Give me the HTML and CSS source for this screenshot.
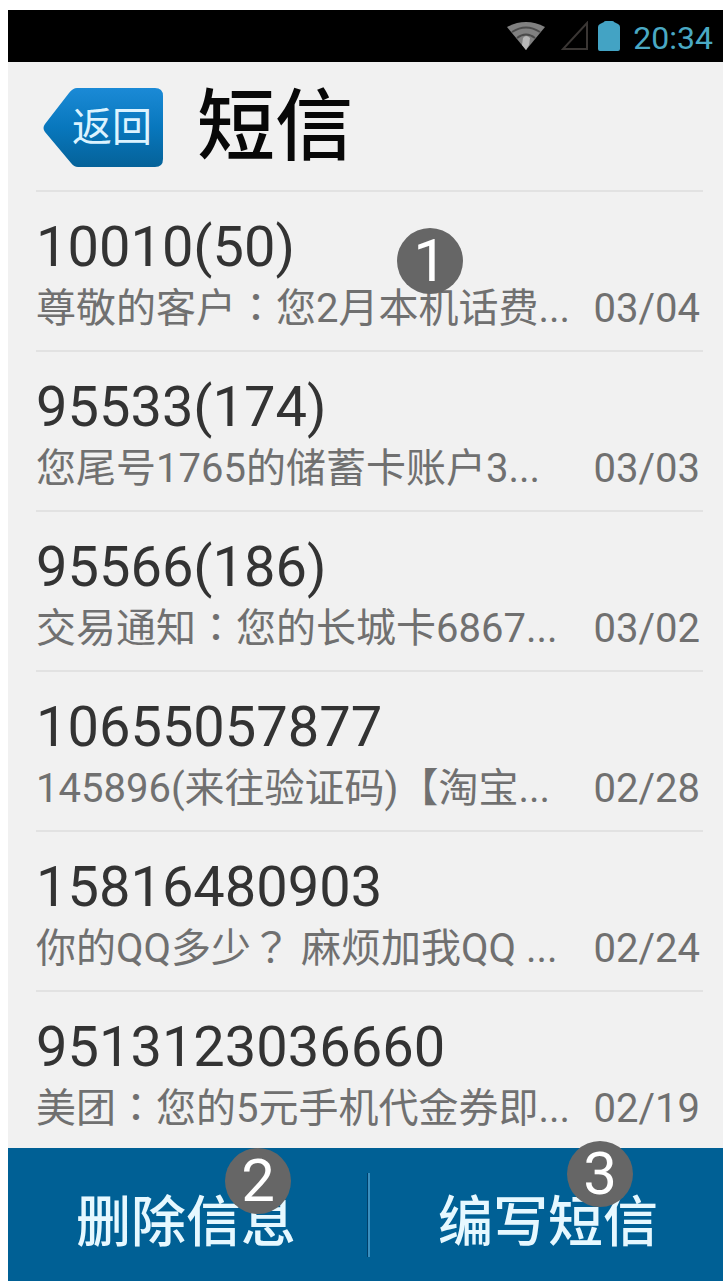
FILE: index.html
```html
<!DOCTYPE html>
<html lang="zh-CN">
<head>
  <meta charset="UTF-8" />
  <meta name="viewport" content="width=device-width, initial-scale=1.0" />
  <title>短信</title>
  <link rel="stylesheet" href="styles.css">
</head>
<body>
  <div class="status-bar">
    <svg class="wifi" viewBox="0 0 42 30" aria-hidden="true">
      <path d="M2 6Q21 -4 40 6L21 29Z" fill="#808080" />
      <path d="M7 11Q21 2 35 11M12 17Q21 10 30 17" fill="none" stroke="#4a4a4a" stroke-width="2" />
      <path d="M18 17Q21 13 25 17L24 24L21 29L17 24Z" fill="#b8b8b8" />
    </svg>
    <svg class="signal" viewBox="0 0 28 30" aria-hidden="true">
      <path d="M26 2V28H2Z" fill="none" stroke="#3a3634" stroke-width="2" />
    </svg>
    <svg class="battery" viewBox="0 0 22 32" aria-hidden="true">
      <path d="M6 2Q6 1 8 1H14Q16 1 16 2L20 4Q22 5 22 7V29Q22 31 20 31H2Q0 31 0 29V7Q0 5 2 4Z" fill="#43a3c4" />
    </svg>
    <span class="clock">20:34</span>
  </div>

  <header class="header">
    <button class="back" type="button">
      <svg class="back-shape" viewBox="0 0 120 80" preserveAspectRatio="none" aria-hidden="true">
        <defs>
          <linearGradient id="backFill" x1="0" y1="0" x2="0" y2="1">
            <stop offset="0" stop-color="#1b8ad6" />
            <stop offset="0.5" stop-color="#0877bd" />
            <stop offset="1" stop-color="#056299" />
          </linearGradient>
        </defs>
        <path d="M34 0H112Q120 0 120 8V71Q120 79 112 79H35Q31 79 28 75L2 44Q-1 40 2 36L26 5Q30 0 34 0Z" fill="url(#backFill)" />
      </svg>
      <span class="back-text">返回</span>
    </button>
    <h1>短信</h1>
  </header>

  <ul class="messages">
    <li class="message">
      <div class="sender">10010(50)</div>
      <div class="line"><span class="preview">尊敬的客户<span class="punct" lang="zh-TW">：</span>您2月本机话费...</span><span class="date">03/04</span></div>
      <span class="badge badge-list">1</span>
    </li>
    <li class="message">
      <div class="sender">95533(174)</div>
      <div class="line"><span class="preview">您尾号1765的储蓄卡账户3...</span><span class="date">03/03</span></div>
    </li>
    <li class="message">
      <div class="sender">95566(186)</div>
      <div class="line"><span class="preview">交易通知<span class="punct" lang="zh-TW">：</span>您的长城卡6867...</span><span class="date">03/02</span></div>
    </li>
    <li class="message">
      <div class="sender">10655057877</div>
      <div class="line"><span class="preview">145896(来往验证码)【淘宝...</span><span class="date">02/28</span></div>
    </li>
    <li class="message">
      <div class="sender">15816480903</div>
      <div class="line"><span class="preview">你的QQ多少<span class="punct" lang="zh-TW">？</span> 麻烦加我QQ ...</span><span class="date">02/24</span></div>
    </li>
    <li class="message">
      <div class="sender">9513123036660</div>
      <div class="line"><span class="preview">美团<span class="punct" lang="zh-TW">：</span>您的5元手机代金券即...</span><span class="date">02/19</span></div>
    </li>
  </ul>

  <nav class="actions">
    <button class="action" type="button">删除信息<span class="badge badge-delete">2</span></button>
    <span class="divider"></span>
    <button class="action" type="button">编写短信<span class="badge badge-write">3</span></button>
  </nav>
</body>
</html>
```

FILE: styles.css
```css
* {
  box-sizing: border-box;
}
body {
  margin: 0;
  padding: 10px 0 0 8px;
  min-height: 100vh;
  display: flex;
  flex-direction: column;
  background: #fff;
  font-family: Roboto, "Noto Sans CJK SC", sans-serif;
}
button {
  border: none;
  padding: 0;
  background: none;
  color: #fff;
  font-family: inherit;
  cursor: pointer;
}
.status-bar {
  height: 52px;
  padding-right: 10px;
  display: flex;
  align-items: center;
  justify-content: flex-end;
  background: #000;
}
.wifi {
  width: 42px;
  height: 30px;
  margin-right: 14px;
}
.signal {
  width: 28px;
  height: 30px;
  margin-right: 9px;
}
.battery {
  width: 22px;
  height: 32px;
  margin-right: 13px;
}
.clock {
  color: #4aa9c4;
  font-size: 32px;
  line-height: 40px;
  padding-top: 3px;
}
.header {
  height: 128px;
  padding: 4px 0 0 35px;
  display: flex;
  align-items: center;
  gap: 34px;
  background: #f1f1f1;
}
.back {
  position: relative;
  width: 120px;
  height: 80px;
}
.back-shape {
  position: absolute;
  inset: 0;
  width: 100%;
  height: 100%;
}
.back-text {
  position: relative;
  display: block;
  padding-left: 18px;
  color: #dcf3ff;
  font-size: 40px;
  line-height: 80px;
}
h1 {
  margin: 0;
  color: #080808;
  font-size: 78px;
  font-weight: 500;
  line-height: 120px;
}
.messages {
  margin: 0;
  padding: 0 20px 0 28px;
  list-style: none;
  background: #f1f1f1;
}
.message {
  position: relative;
  padding: 23px 0 11px;
  border-top: 2px solid #e2e2e2;
}
.message:last-child {
  padding-bottom: 9px;
}
.sender {
  color: #333;
  font-size: 56px;
  line-height: 64px;
}
.line {
  display: flex;
  justify-content: space-between;
  padding-right: 3px;
  color: #707070;
  font-size: 40px;
  line-height: 60px;
  white-space: nowrap;
}
.preview {
  white-space: pre;
}
/* keeps full-width marks in the middle of their cell */
.punct {
  font-family: "Noto Sans CJK TC", sans-serif;
  line-height: 1;
}
.badge {
  position: absolute;
  width: 66px;
  height: 66px;
  border-radius: 50%;
  background: #666;
  color: #fff;
  font-size: 60px;
  line-height: 66px;
  text-align: center;
}
.badge-list {
  top: 36px;
  left: 361px;
}
.actions {
  flex: 1;
  min-height: 133px;
  display: flex;
  align-items: center;
  background: #006095;
}
.action {
  position: relative;
  flex: 1;
  align-self: stretch;
  padding: 4px 0 0 3px;
  color: #e6f8ff;
  font-size: 55px;
  font-weight: 500;
}
.badge-delete,
.badge-write {
  font-weight: 400;
}
.badge-delete {
  top: 0;
  left: 217px;
}
.badge-write {
  top: -7px;
  right: 90px;
}
.divider {
  width: 3px;
  height: 84px;
  margin-left: 6px;
  border-left: 1px solid #00406b;
  border-right: 2px solid #3a8fbf;
}
```
